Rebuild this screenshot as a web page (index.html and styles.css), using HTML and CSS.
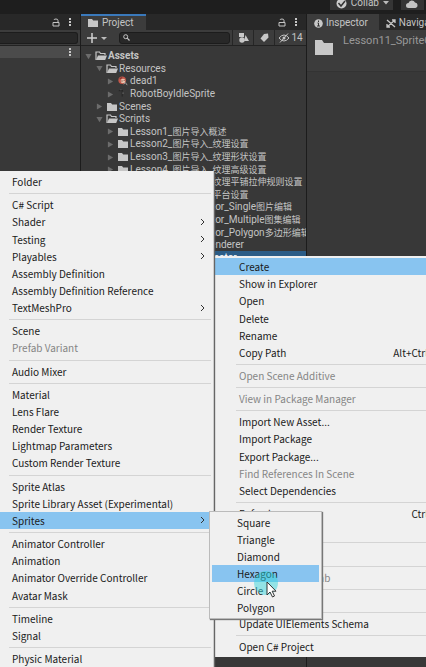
FILE: index.html
```html
<!DOCTYPE html>
<html lang="en">
<head>
<meta charset="utf-8">
<title>Project</title>
<link rel="stylesheet" href="styles.css">
</head>
<body>
<svg class="defs" aria-hidden="true">
  <symbol id="folder" viewBox="0 0 12 10"><path d="M1 1h4l1.200 1.500H11V9H1z" fill="#c6c6c6"/></symbol>
  <symbol id="folder-open" viewBox="0 0 12 10"><path d="M1 9V1h3.500l1 1.500H10V4" fill="none" stroke="#c6c6c6" stroke-width="1.200"/><path d="M3 4.500h9L10.200 9H1z" fill="#c6c6c6"/></symbol>
  <symbol id="right" viewBox="0 0 8 8"><path d="M1 .5 7 4 1 7.500z" fill="#6c6c6c"/></symbol>
  <symbol id="down" viewBox="0 0 8 8"><path d="M.5 1h7L4 7z" fill="#6c6c6c"/></symbol>
  <symbol id="lock" viewBox="0 0 8 9"><path d="M1 4.500h6v3.500H1zM6 4.500V2.500Q6 1 4 1T2 2" fill="none" stroke="#c4c4c4" stroke-width="1"/></symbol>
  <symbol id="kebab" viewBox="0 0 4 10"><path d="M1 1h2v2H1zM1 4h2v2H1zM1 7h2v2H1z" fill="#c8c8c8"/></symbol>
  <symbol id="chevron" viewBox="0 0 6 8"><path d="M1 1l3 3-3 3" fill="none" stroke="#333" stroke-width="1"/></symbol>
</svg>
<header class="topbar">
  <button class="top-btn"><svg width="11" height="11" viewBox="0 0 11 11"><circle cx="5.500" cy="5.500" r="5" fill="#ccc"/><path d="M2.500 5l2.500 3 4-5" fill="none" stroke="#333" stroke-width="1.500"/></svg>Collab<svg width="6" height="4" viewBox="0 0 6 4"><path d="M0 0h6L3 3.500z" fill="#bbb"/></svg></button>
  <button class="top-btn cloud" aria-label="Cloud"><svg width="12" height="9" viewBox="0 0 12 9"><path d="M2.500 9a2.500 2.500 0 0 1 0-5A3.500 3.500 0 0 1 9 3.500 2.800 2.800 0 0 1 9.500 9z" fill="#c4c4c4"/></svg></button>
</header>
<main class="panels">
  <section class="panel">
    <div class="tabs"><span class="tab-tools"><svg width="8" height="9"><use href="#lock"/></svg><svg width="4" height="10"><use href="#kebab"/></svg></span></div>
    <div class="toolbar"><input class="search side" type="text" aria-label="Search hierarchy"></div>
    <div class="scene-row"><svg width="4" height="10"><use href="#kebab"/></svg></div>
  </section>
  <section class="panel project">
    <div class="tabs"><button class="tab selected"><svg width="12" height="10"><use href="#folder"/></svg>Project</button><span class="tab-tools"><svg width="8" height="9"><use href="#lock"/></svg><svg width="4" height="10"><use href="#kebab"/></svg></span></div>
    <div class="toolbar">
      <button class="tool add" aria-label="Add"><svg width="20" height="10" viewBox="0 0 20 10"><path d="M5 0v10M0 5h10" stroke="#d0d0d0" stroke-width="1.500"/><path d="M14 4h6l-3 3z" fill="#bbb"/></svg></button>
      <label class="search"><svg width="7" height="7" viewBox="0 0 7 7"><circle cx="2.700" cy="2.700" r="2" fill="none" stroke="#c4c4c4"/><path d="M4.200 4.200 6.500 6.500" stroke="#c4c4c4" stroke-width="1.200"/></svg><input type="text" aria-label="Search project"></label>
      <button class="tool cell" aria-label="Search by type"><svg width="11" height="11" viewBox="0 0 11 11"><path d="M1 1h5v4H1zM7.500 3 11 9H6z" fill="#c8c8c8"/><circle cx="4" cy="8" r="2.700" fill="#c8c8c8"/></svg></button>
      <button class="tool cell" aria-label="Search by label"><svg width="9" height="9" viewBox="0 0 9 9"><path d="M4 1 8 .5 8.500 4.500 4 9 .5 5.500z" fill="#c8c8c8"/></svg></button>
      <button class="tool cell count"><svg width="12" height="10" viewBox="0 0 12 10"><path d="M1 5q5-6 10 0-5 6-10 0M2 9.500 10 .5" fill="none" stroke="#c4c4c4"/><circle cx="6" cy="5" r="1.500" fill="#c4c4c4"/></svg>14</button>
    </div>
    <div class="tree" role="tree">
      <div class="node root" role="treeitem"><svg class="arrow"><use href="#down"/></svg><svg class="icon"><use href="#folder-open"/></svg>Assets</div>
      <div class="node l1" role="treeitem"><svg class="arrow"><use href="#down"/></svg><svg class="icon"><use href="#folder-open"/></svg>Resources</div>
      <div class="node l2" role="treeitem"><svg class="arrow"><use href="#right"/></svg><svg class="icon" viewBox="0 0 12 12"><circle cx="5" cy="5" r="4.500" fill="#c4574a"/><circle cx="6" cy="6" r="2.800" fill="#e8c4ae"/><path d="M4 6h1.500M7 5l1 1M2 3l3-1" stroke="#5d2723"/><path d="M7 10l2-2 2 3" stroke="#aaa" fill="none"/></svg>dead1</div>
      <div class="node l2" role="treeitem"><svg class="arrow"><use href="#right"/></svg><svg class="icon" viewBox="0 0 12 12"><path d="M1 2h5M5 3v6" stroke="#202020" fill="none"/><path d="M3 1h1M6 4v2" stroke="#777"/></svg>RobotBoyIdleSprite</div>
      <div class="node l1" role="treeitem"><svg class="arrow"><use href="#right"/></svg><svg class="icon"><use href="#folder"/></svg>Scenes</div>
      <div class="node l1" role="treeitem"><svg class="arrow"><use href="#down"/></svg><svg class="icon"><use href="#folder-open"/></svg>Scripts</div>
      <div class="node l2" role="treeitem"><svg class="arrow"><use href="#right"/></svg><svg class="icon"><use href="#folder"/></svg>Lesson1_<span lang="zh">图片导入概述</span></div>
      <div class="node l2" role="treeitem"><svg class="arrow"><use href="#right"/></svg><svg class="icon"><use href="#folder"/></svg>Lesson2_<span lang="zh">图片导入_纹理设置</span></div>
      <div class="node l2" role="treeitem"><svg class="arrow"><use href="#right"/></svg><svg class="icon"><use href="#folder"/></svg>Lesson3_<span lang="zh">图片导入_纹理形状设置</span></div>
      <div class="node l2" role="treeitem"><svg class="arrow"><use href="#right"/></svg><svg class="icon"><use href="#folder"/></svg>Lesson4_<span lang="zh">图片导入_纹理高级设置</span></div>
      <div class="node l2" role="treeitem"><svg class="arrow"><use href="#right"/></svg><svg class="icon"><use href="#folder"/></svg>Lesson5_<span lang="zh">图片导入_纹理平铺拉伸规则设置</span></div>
      <div class="node l2" role="treeitem"><svg class="arrow"><use href="#right"/></svg><svg class="icon"><use href="#folder"/></svg>Lesson6_<span lang="zh">图片导入_平台设置</span></div>
      <div class="node l2" role="treeitem"><svg class="arrow"><use href="#right"/></svg><svg class="icon"><use href="#folder"/></svg>Lesson7_SpriteEditor_Single<span lang="zh">图片编辑</span></div>
      <div class="node l2" role="treeitem"><svg class="arrow"><use href="#right"/></svg><svg class="icon"><use href="#folder"/></svg>Lesson8_SpriteEditor_Multiple<span lang="zh">图集编辑</span></div>
      <div class="node l2" role="treeitem"><svg class="arrow"><use href="#right"/></svg><svg class="icon"><use href="#folder"/></svg>Lesson9_SpriteEditor_Polygon<span lang="zh">多边形编辑</span></div>
      <div class="node l2" role="treeitem"><svg class="arrow"><use href="#right"/></svg><svg class="icon"><use href="#folder"/></svg>Lesson10_SpriteRenderer</div>
      <div class="node l2 active" role="treeitem"><svg class="arrow"><use href="#right"/></svg><svg class="icon"><use href="#folder"/></svg>Lesson11_SpriteCreator</div>
    </div>
  </section>
  <section class="panel inspector">
    <div class="tabs">
      <button class="tab selected"><svg width="9" height="9" viewBox="0 0 9 9"><circle cx="4.500" cy="4.500" r="4.300" fill="#c8c8c8"/><path d="M4.500 1.500v1.500M3.500 4h1v3M3 7h3" stroke="#333" fill="none"/></svg>Inspector</button>
      <button class="tab"><svg width="10" height="9" viewBox="0 0 10 9"><path d="M1 1l8 7M9 1 1 8M6 1h3v3M1 5v3h3" stroke="#c4c4c4" stroke-width="1.300" fill="none"/></svg>Navigation</button>
    </div>
    <div class="asset-head"><svg width="20" height="17" viewBox="0 0 20 17"><path d="M1 1h7l2 3h9v12H1z" fill="#c8c8c8"/></svg><span>Lesson11_SpriteCreator</span></div>
  </section>
</main>

<nav class="menu context" role="menu" aria-label="Assets">
  <button class="on">Create</button><button>Show in Explorer</button><button>Open</button><button>Delete</button><button>Rename</button><button>Copy Path<kbd>Alt+Ctrl+C</kbd></button>
  <hr><button disabled>Open Scene Additive</button>
  <hr><button disabled>View in Package Manager</button>
  <hr><button>Import New Asset...</button><button>Import Package</button><button>Export Package...</button><button disabled>Find References In Scene</button><button>Select Dependencies</button>
  <hr><button>Refresh<kbd>Ctrl+R</kbd></button><button>Reimport</button>
  <hr><button>Reimport All</button>
  <hr><button disabled>Extract From Prefab</button>
  <hr><button>Run API Updater</button>
  <hr><button>Update UIElements Schema</button>
  <hr><button>Open C# Project</button>
</nav>

<nav class="menu create" role="menu" aria-label="Create">
  <button>Folder</button>
  <hr><button>C# Script</button><button>Shader<svg><use href="#chevron"/></svg></button><button>Testing<svg><use href="#chevron"/></svg></button><button>Playables<svg><use href="#chevron"/></svg></button><button>Assembly Definition</button><button>Assembly Definition Reference</button><button>TextMeshPro<svg><use href="#chevron"/></svg></button>
  <hr><button>Scene</button><button disabled>Prefab Variant</button>
  <hr><button>Audio Mixer</button>
  <hr><button>Material</button><button>Lens Flare</button><button>Render Texture</button><button>Lightmap Parameters</button><button>Custom Render Texture</button>
  <hr><button>Sprite Atlas</button><button>Sprite Library Asset (Experimental)</button><button class="on">Sprites<svg><use href="#chevron"/></svg></button>
  <hr><button>Animator Controller</button><button>Animation</button><button>Animator Override Controller</button><button>Avatar Mask</button>
  <hr><button>Timeline</button><button>Signal</button>
  <hr><button>Physic Material</button>
</nav>

<nav class="menu sprites" role="menu" aria-label="Sprites">
  <button>Square</button><button>Triangle</button><button>Diamond</button><button class="on">Hexagon</button><button>Circle</button><button>Polygon</button>
</nav>
<svg class="pointer" viewBox="0 0 26 30" aria-hidden="true"><circle cx="13" cy="13" r="12" fill="#35d5dc" opacity=".5"/><path d="M14 12v13l3-3 2.500 5 2-1-2.300-4.800H23z" fill="#fff" stroke="#333" stroke-width="1"/></svg>
</body>
</html>
```

FILE: styles.css
```css
* { box-sizing: border-box; }
html, body { height: 100%; }
body {
  margin: 0;
  display: flex;
  flex-direction: column;
  overflow: hidden;
  position: relative;
  background: #1c1c1c;
  color: #c4c4c4;
  font: 10px/12px Roboto, "Noto Sans CJK SC", sans-serif;
}
button, input {
  margin: 0;
  padding: 0;
  border: 0;
  background: none;
  color: inherit;
  font: inherit;
}
svg { flex: none; }
.defs { position: absolute; width: 0; height: 0; }

.topbar {
  flex: none;
  height: 14px;
  display: flex;
  align-items: flex-end;
  justify-content: flex-end;
  gap: 8px;
  padding: 0 2px 4px 0;
  overflow: hidden;
  background: #1e1e1e;
}
.top-btn {
  display: flex;
  align-items: center;
  gap: 4px;
  height: 14px;
  padding: 0 4px 0 6px;
  background: #353535;
  font-size: 10px;
}
.top-btn.cloud { padding: 0 6px 0 5px; }

.panels {
  flex: 1;
  min-height: 0;
  display: grid;
  grid-template-columns: 80px 225px 1fr;
  gap: 1px;
}
.panel {
  min-width: 0;
  display: flex;
  flex-direction: column;
  overflow: hidden;
  background: #383838;
}
.tabs {
  flex: none;
  height: 16px;
  display: flex;
  background: #282828;
}
.tab {
  display: flex;
  align-items: center;
  gap: 3px;
  padding: 2px 8px 0 6px;
}
.tab.selected { background: #3c3c3c; }
.project .tab.selected { padding: 0 12px 0 6px; border-top: 2px solid #3a79bb; }
.tab-tools {
  display: flex;
  align-items: center;
  gap: 8px;
  margin-left: auto;
  padding-right: 8px;
}
.toolbar {
  flex: none;
  height: 16px;
  display: flex;
  align-items: center;
  background: #3c3c3c;
  border-bottom: 1px solid #222;
}
.tool {
  height: 100%;
  display: flex;
  align-items: center;
  justify-content: center;
}
.add { padding: 0 12px 0 6px; }
.cell { width: 21px; border-left: 1px solid #262626; }
.count { width: 32px; gap: 1px; }
.search {
  flex: 1;
  min-width: 0;
  height: 12px;
  display: flex;
  align-items: center;
  padding-left: 3px;
  margin-right: 2px;
  border: 1px solid #1c1c1c;
  border-radius: 3px;
  background: #282828;
}
.search input { flex: 1; min-width: 0; height: 10px; }
.search.side { border-left: 0; border-radius: 0 3px 3px 0; }
.scene-row {
  height: 12px;
  display: flex;
  align-items: center;
  justify-content: flex-end;
  padding-right: 8px;
  background: #4b4b4b;
}

.tree {
  flex: 1;
  min-height: 0;
  padding-top: 4px;
  display: grid;
  grid-template-rows: repeat(49, minmax(0, 1fr));
}
.node {
  display: flex;
  align-items: center;
  padding-left: 4px;
  white-space: nowrap;
}
.node.root { font-weight: 700; }
.node.l1 { padding-left: 15px; }
.node.l2 { padding-left: 26px; }
.node.active { background: #2c5d87; color: #fff; }
.node span { font-size: 9px; }
.arrow { width: 7px; height: 7px; margin-right: 3px; }
.icon { width: 12px; height: 10px; margin-right: 1px; }

.inspector .tab { padding-left: 7px; padding-right: 11px; }
.asset-head {
  display: flex;
  gap: 9px;
  height: 42px;
  padding: 5px 7px;
  background: #3c3c3c;
  border-bottom: 1px solid #333;
  color: #999;
  font-size: 11px;
}
.asset-head svg { margin-top: 4px; }

.menu {
  position: absolute;
  display: flex;
  flex-direction: column;
  background: #f0f0f0;
  color: #1a1a1a;
  font: 10px/17px "Noto Sans CJK SC", sans-serif;
}
.menu button {
  flex: 1 1 17px;
  min-height: 17px;
  display: flex;
  align-items: center;
  justify-content: space-between;
  white-space: nowrap;
  text-align: left;
}
.menu button:disabled { color: #858585; }
.menu button.on { background: #88c4f0; }
.menu hr {
  flex: none;
  height: 1px;
  margin: 3px 2px 2px 9px;
  border: 0;
  background: #d4d4d4;
}
.menu svg { width: 6px; height: 8px; }
.menu kbd { font: inherit; }
.create {
  top: 171px;
  bottom: 0;
  left: 0;
  width: 214px;
  padding-top: 2px;
  border-right: 1px solid #ccc;
  box-shadow: 1px 1px 1px #666;
}
.create button { padding: 0 7px 0 12px; }
.create button.on { margin-right: 3px; padding-right: 4px; }
.context {
  top: 256px;
  bottom: 10px;
  left: 214px;
  right: -37px;
  padding: 2px 0;
}
.context button { padding: 0 23px 0 25px; }
.context hr { margin-left: 22px; }
.sprites {
  top: 511px;
  left: 209px;
  width: 113px;
  padding: 2px;
  border: 1px solid #bbb;
  box-shadow: 1px 1px 1px #777;
}
.sprites button { padding-left: 25px; }
.pointer {
  position: absolute;
  top: 570px;
  left: 253px;
  width: 26px;
  height: 30px;
}
```
